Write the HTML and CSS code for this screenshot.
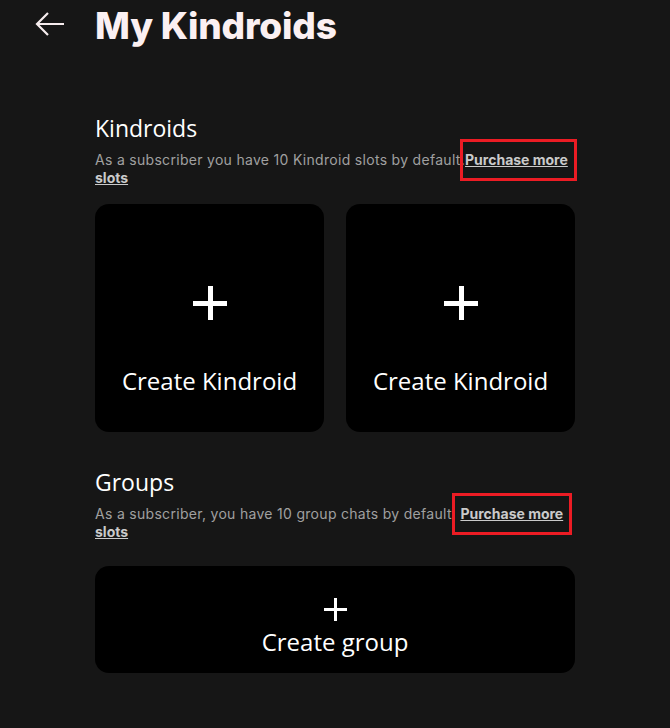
FILE: index.html
```html
<!DOCTYPE html>
<html lang="en">
<head>
    <meta charset="UTF-8">
    <title>My Kindroids</title>
    <link rel="stylesheet" href="styles.css">
</head>
<body>
<div id="page">
    <div class="topbar">
        <svg class="back" width="30" height="26" viewBox="0 0 30 26">
            <path d="M29 13 H2 M13 2 L2 13 L13 24" fill="none" stroke="#f6ecee" stroke-width="2.2"/>
        </svg>
        <h1 class="title">My Kindroids</h1>
    </div>

    <div class="section">
        <h2 class="sec_title">Kindroids</h2>
        <p class="sub">As a subscriber you have 10 Kindroid slots by default.<a class="more" href="#"><span class="mark">Purchase more</span> slots</a></p>
        <div class="cards">
            <div class="card">
                <div class="plus"></div>
                <div class="card_text">Create Kindroid</div>
            </div>
            <div class="card">
                <div class="plus"></div>
                <div class="card_text">Create Kindroid</div>
            </div>
        </div>
    </div>

    <div class="section sec2">
        <h2 class="sec_title">Groups</h2>
        <p class="sub">As a subscriber, you have 10 group chats by default. <a class="more" href="#"><span class="mark mark2">Purchase more</span> slots</a></p>
        <div class="group_card">
            <div class="plus small"></div>
            <div class="card_text">Create group</div>
        </div>
    </div>
</div>
</body>
</html>
```

FILE: styles.css
```css
body
{
    margin: 0px;
    background-color: #161616;
    color: #ffffff;
    font-family: "Open Sans", "Noto Sans", sans-serif;
}
#page{
    width: 670px;
    height: 728px;
}
.topbar{
    display: flex;
    align-items: center;
    height: 50px;
    padding-left: 35px;
}
.back{
    display: block;
    margin-top: -2px;
}
.title{
    margin: 0 0 0 30px;
    font-family: "Inter", sans-serif;
    font-size: 37px;
    font-weight: 800;
    letter-spacing: -0.2px;
    color: #fbf0f2;
}
.section{
    width: 480px;
    margin: 64px 0 0 95px;
}
.sec2{
    margin-top: 36px;
}
.sec_title{
    margin: 0;
    font-size: 23px;
    font-weight: 400;
    line-height: 28px;
}
.sub{
    margin: 9px 0 0 0;
    font-family: "Inter", sans-serif;
    font-size: 14px;
    line-height: 18px;
    color: #a0a0a0;
    letter-spacing: 0.3px;
}
.more{
    color: #cacaca;
    font-weight: 700;
    text-decoration: underline;
    letter-spacing: 0;
}
.mark{
    position: relative;
}
.mark:after{
    content: "";
    position: absolute;
    left: -5px;
    right: -9px;
    top: -12px;
    bottom: -13px;
    border: 3px solid #ec1c24;
}
.mark2:after{
    left: -8px;
    right: -9px;
}
.cards{
    display: flex;
    gap: 22px;
    margin-top: 17px;
}
.card{
    width: 229px;
    height: 228px;
    background-color: #000;
    border-radius: 14px;
    display: flex;
    flex-direction: column;
    align-items: center;
}
.plus{
    position: relative;
    width: 34px;
    height: 34px;
    margin-top: 82px;
}
.plus:before, .plus:after{
    content: "";
    position: absolute;
    background-color: #fff;
}
.plus:before{
    left: 0;
    right: 0;
    top: 15px;
    height: 5px;
}
.plus:after{
    top: 0;
    bottom: 0;
    left: 15px;
    width: 5px;
}
.card_text{
    margin-top: 44px;
    font-size: 24px;
}
.group_card{
    margin-top: 25px;
    height: 107px;
    background-color: #000;
    border-radius: 14px;
    display: flex;
    flex-direction: column;
    align-items: center;
}
.plus.small{
    width: 23px;
    height: 23px;
    margin-top: 32px;
}
.plus.small:before{
    top: 10px;
    height: 3px;
}
.plus.small:after{
    left: 10px;
    width: 3px;
}
.group_card .card_text{
    margin-top: 4px;
}
```
